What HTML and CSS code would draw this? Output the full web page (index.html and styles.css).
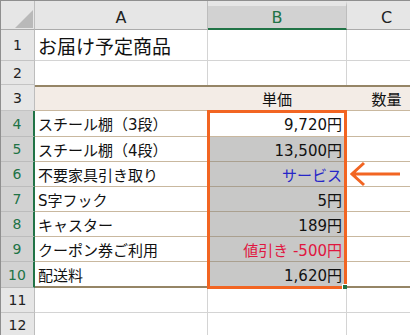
FILE: index.html
```html
<!DOCTYPE html>
<html lang="ja">
<head>
    <meta charset="UTF-8">
    <title>お届け予定商品</title>
    <link rel="stylesheet" href="styles.css">
</head>
<body>
    <div class="sheet">
        <!-- column headers -->
        <div class="corner"></div>
        <div class="col-head">A</div>
        <div class="col-head sel">B</div>
        <div class="col-head">C</div>

        <!-- 1 -->
        <div class="row-head">1</div>
        <div class="cell title">お届け予定商品</div>
        <div class="cell"></div>
        <div class="cell"></div>

        <!-- 2 -->
        <div class="row-head">2</div>
        <div class="cell blank"></div>
        <div class="cell blank"></div>
        <div class="cell blank"></div>

        <!-- 3: table header -->
        <div class="row-head">3</div>
        <div class="cell band"></div>
        <div class="cell band center">単価</div>
        <div class="cell band center">数量</div>

        <!-- 4 -->
        <div class="row-head sel">4</div>
        <div class="cell item">スチール棚（3段）</div>
        <div class="cell item num active">
            9,720円
            <!-- selected range B4:B10 -->
            <div class="range"></div>
        </div>
        <div class="cell item"></div>

        <!-- 5 -->
        <div class="row-head sel">5</div>
        <div class="cell item">スチール棚（4段）</div>
        <div class="cell item num picked">13,500円</div>
        <div class="cell item"></div>

        <!-- 6 -->
        <div class="row-head sel">6</div>
        <div class="cell item">不要家具引き取り</div>
        <div class="cell item num picked free">サービス</div>
        <div class="cell item">
            <svg class="arrow" width="52" height="26" viewBox="0 0 52 26">
                <path d="M2 13 H50 M14 2 L2 13 L14 24" fill="none" stroke="#f26522" stroke-width="3"/>
            </svg>
        </div>

        <!-- 7 -->
        <div class="row-head sel">7</div>
        <div class="cell item">S字フック</div>
        <div class="cell item num picked">5円</div>
        <div class="cell item"></div>

        <!-- 8 -->
        <div class="row-head sel">8</div>
        <div class="cell item">キャスター</div>
        <div class="cell item num picked">189円</div>
        <div class="cell item"></div>

        <!-- 9 -->
        <div class="row-head sel">9</div>
        <div class="cell item">クーポン券ご利用</div>
        <div class="cell item num picked discount">値引き -500円</div>
        <div class="cell item"></div>

        <!-- 10 -->
        <div class="row-head sel">10</div>
        <div class="cell item last">配送料</div>
        <div class="cell item last num picked">1,620円</div>
        <div class="cell item last"></div>

        <!-- 11 -->
        <div class="row-head">11</div>
        <div class="cell"></div>
        <div class="cell"></div>
        <div class="cell"></div>

        <!-- 12 -->
        <div class="row-head">12</div>
        <div class="cell"></div>
        <div class="cell"></div>
        <div class="cell"></div>
    </div>
</body>
</html>
```

FILE: styles.css
```css
body {
    margin: 0;
    font-family: "DejaVu Sans", "Noto Sans CJK JP", sans-serif;
    font-size: 15px;
    color: #111;
    background: #fff;
}
.sheet {
    display: grid;
    grid-template-columns: 34px 173px 139px 80px;
    grid-template-rows: 29px 31px 24px 26px 26px 25px 25px 25px 25px 25px 26px 25px 25px;
    width: 409px;
    height: 334px;
    overflow: hidden;
    border-top: 1px solid #8f8f8f;
    border-left: 1px solid #8f8f8f;
}
.sheet > div {
    box-sizing: border-box;
    min-width: 0;
}

/* headers */
.corner, .col-head, .row-head {
    background-color: #e6e6e6;
    display: flex;
    align-items: center;
    justify-content: center;
    color: #222;
}
.corner {
    position: relative;
    border-right: 1px solid #bdbdbd;
    border-bottom: 1px solid #ababab;
}
.corner::after {
    content: "";
    position: absolute;
    left: 14px;
    top: 9px;
    width: 18px;
    height: 18px;
    background: #b9b9b9;
    clip-path: polygon(100% 0, 100% 100%, 0 100%);
}
.col-head {
    font-size: 16px;
    padding-top: 4px;
    border-right: 1px solid #bdbdbd;
    border-bottom: 1px solid #ababab;
}
.col-head.sel {
    background-color: #d2d2d2;
    color: #217346;
    border-top: 5px solid #e6e6e6;
    border-bottom: 2px solid #217346;
    padding-top: 0;
}
.row-head {
    font-size: 14px;
    border-right: 1px solid #bdbdbd;
    border-bottom: 1px solid #c4c4c4;
}
.row-head.sel {
    background-color: #d2d2d2;
    color: #217346;
    border-right: 2px solid #217346;
    border-bottom-color: #bcbcbc;
}

/* cells */
.cell {
    display: flex;
    align-items: center;
    padding: 0 4px 0 3px;
    white-space: nowrap;
    border-right: 1px solid #d4d4d4;
    border-bottom: 1px solid #d4d4d4;
}
.cell.blank {
    border-bottom: none;
}
.title {
    font-family: "Noto Sans CJK JP", sans-serif;
    font-size: 19px;
}
.band {
    background-color: #f3ece6;
    border-top: 2px solid #958566;
    border-right: none;
    border-bottom: 1px solid #c9b89f;
}
.center {
    justify-content: center;
}
.item {
    border-right: none;
    border-bottom: 1px solid #c9b89f;
}
.item.last {
    border-bottom: 2px solid #958566;
}
.num {
    justify-content: flex-end;
    padding-right: 5px;
}
.picked {
    background-color: #c8c8c7;
    border-bottom-color: #aaa08f;
}
.free {
    color: #2626c8;
}
.discount {
    color: #e0163f;
}
.arrow {
    display: block;
}

/* selection box over B4:B10 */
.active {
    position: relative;
}
.range {
    position: absolute;
    left: -1px;
    top: -1px;
    right: 0;
    height: 179px;
    box-sizing: border-box;
    border: 3px solid #f26522;
    z-index: 2;
    pointer-events: none;
}
.range::after {
    content: "";
    position: absolute;
    right: -3px;
    bottom: -3px;
    width: 4px;
    height: 4px;
    background: #217346;
    border-top: 1px solid #fff;
    border-left: 1px solid #fff;
}
```
